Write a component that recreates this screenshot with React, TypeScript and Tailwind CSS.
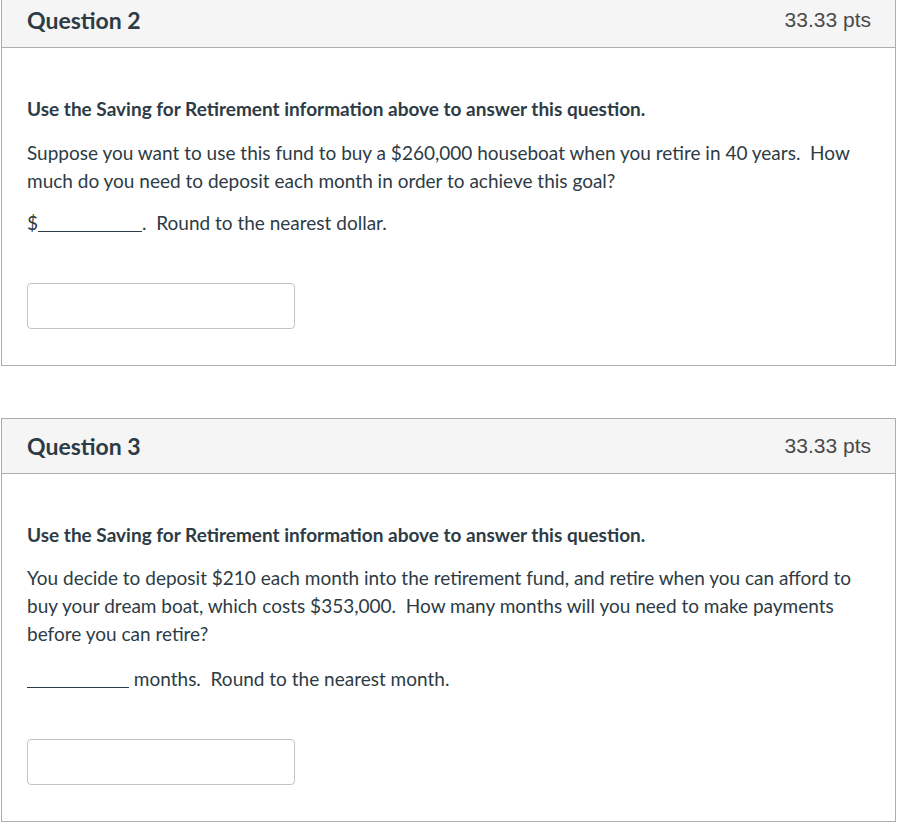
import React from "react";

const lato = { fontFamily: "Lato, 'Noto Sans', sans-serif" };

function Card({
  title,
  children,
  className,
}: {
  title: string;
  children: React.ReactNode;
  className?: string;
}) {
  return (
    <div className={"w-[895px] border border-[#adadad] bg-white " + (className ?? "")}>
      <div className="flex h-[55px] items-center justify-between border-b border-[#adadad] bg-[#f5f5f5] pl-[25px] pr-[24px]">
        <h2 className="font-['Lato',sans-serif] text-[23px] font-bold text-[#2d3b45]">{title}</h2>
        <span className="font-['Liberation_Sans',Arial,sans-serif] text-[21px] text-[#4a4a4a]">33.33 pts</span>
      </div>
      <div className="px-[25px] pt-[47px] pb-[36px] font-['Lato',sans-serif] text-[19px] leading-[28px] text-[#2d3b45]">
        {children}
        <div className="mt-[46px] h-[46px] w-[268px] rounded-[4px] border border-[#c4c4c4] bg-white" />
      </div>
    </div>
  );
}

function Blank({ w }: { w: string }) {
  return <span className={"inline-block h-[1px] translate-y-[2px] bg-[#2d3b45] align-baseline " + w} />;
}

export default function App() {
  return (
    <div className="min-h-[828px] bg-white pl-[1px]" style={lato}>
      <Card title="Question 2" className="-mt-[8px]">
        <p className="font-bold">Use the Saving for Retirement information above to answer this question.</p>
        <p className="mt-[16px]">
          Suppose you want to use this fund to buy a $260,000 houseboat when you retire in 40 years.&nbsp; How much do
          you need to deposit each month in order to achieve this goal?
        </p>
        <p className="mt-[14px]">
          $<Blank w="w-[104px]" />.&nbsp; Round to the nearest dollar.
        </p>
      </Card>
      <Card title="Question 3" className="mt-[52px]">
        <p className="font-bold">Use the Saving for Retirement information above to answer this question.</p>
        <p className="mt-[15px]">
          You decide to deposit $210 each month into the retirement fund, and retire when you can afford to buy your
          dream boat, which costs $353,000.&nbsp; How many months will you need to make payments before you can retire?
        </p>
        <p className="mt-[17px]">
          <Blank w="w-[102px]" /> months.&nbsp; Round to the nearest month.
        </p>
      </Card>
    </div>
  );
}
